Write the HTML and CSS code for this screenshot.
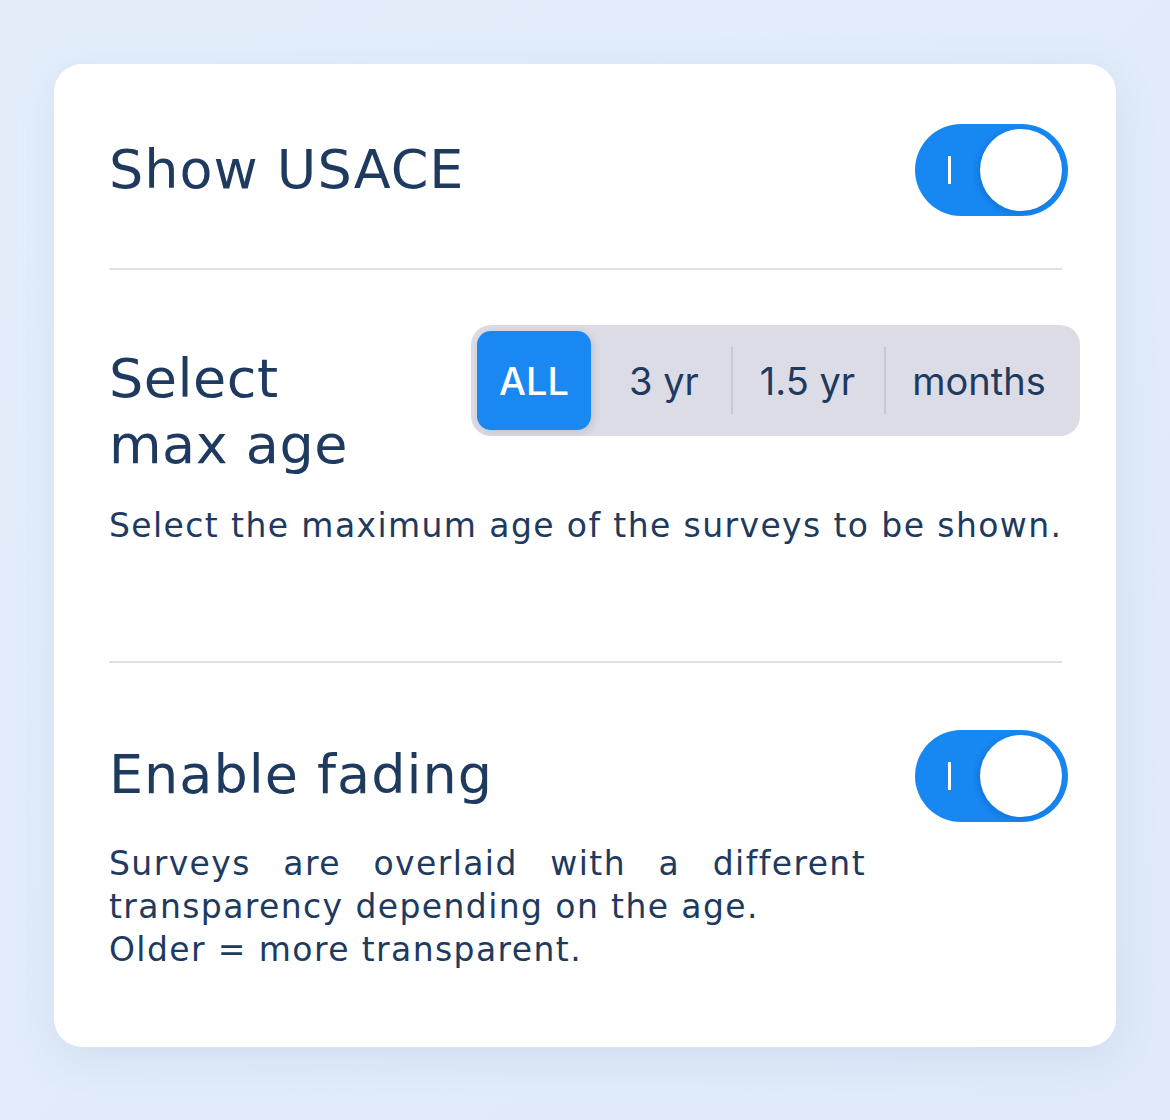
FILE: index.html
```html
<!DOCTYPE html>
<html lang="en">
<head>
    <meta charset="UTF-8">
    <meta name="viewport" content="width=device-width, initial-scale=1.0">
    <title>Survey Settings</title>
    <link rel="stylesheet" href="styles.css">
</head>
<body>
    <div class="card">
        <div class="section row">
            <div class="label">Show USACE</div>
            <div class="toggle on"><span class="mark"></span><span class="thumb"></span></div>
        </div>

        <div class="section age">
            <div class="row top">
                <div class="label narrow">Select max age</div>
                <div class="segments">
                    <div class="seg active">ALL</div>
                    <div class="seg">3 yr</div>
                    <div class="seg">1.5 yr</div>
                    <div class="seg">months</div>
                </div>
            </div>
            <p class="desc single">Select the maximum age of the surveys to be shown.</p>
        </div>

        <div class="section fading">
            <div class="row top">
                <div class="label">Enable fading</div>
                <div class="toggle on"><span class="mark"></span><span class="thumb"></span></div>
            </div>
            <p class="desc justify">Surveys are overlaid with a different transparency depending on the age.<br>Older = more transparent.</p>
        </div>
    </div>
</body>
</html>
```

FILE: styles.css
```css
body {
    margin: 0;
    background: linear-gradient(135deg, #e4eefb, #dfe9f8);
    font-family: 'DejaVu Sans', sans-serif;
    color: #1e3a5f;
    height: 1120px;
    overflow: hidden;
}
.card {
    width: 1062px;
    height: 983px;
    margin: 64px 0 0 54px;
    padding: 0 54px 0 55px;
    box-sizing: border-box;
    background: #fff;
    border-radius: 28px;
    box-shadow: 0 10px 40px rgba(120, 150, 200, 0.15);
}
.section {
    border-bottom: 2px solid #dde2ea;
}
.section:last-child {
    border-bottom: none;
}
.row {
    display: flex;
    justify-content: space-between;
    align-items: center;
}
.section.row {
    padding: 60px 0 52px;
}
.row.top {
    align-items: flex-start;
}
.label {
    font-size: 54px;
    line-height: 66px;
    letter-spacing: 1px;
}
.label.narrow {
    width: 290px;
    letter-spacing: 0.5px;
}
.toggle {
    position: relative;
    width: 153px;
    height: 92px;
    border-radius: 46px;
    background: #1787f2;
    margin-right: -6px;
    flex-shrink: 0;
}
.toggle .thumb {
    position: absolute;
    right: 6px;
    top: 5px;
    width: 82px;
    height: 82px;
    border-radius: 50%;
    background: #fff;
    box-shadow: -2px 2px 6px rgba(0, 40, 100, 0.2);
}
.toggle .mark {
    position: absolute;
    left: 33px;
    top: 32px;
    width: 3px;
    height: 28px;
    background: #fff;
}

.age {
    padding: 55px 0 113px;
}
.age .label {
    padding-top: 21px;
}
.segments {
    display: flex;
    align-items: center;
    background: #dcdce6;
    border-radius: 20px;
    padding: 6px;
    margin-right: -18px;
    height: 111px;
    box-sizing: border-box;
    font-family: Inter, 'Roboto', sans-serif;
    font-size: 38px;
}
.seg {
    height: 99px;
    display: flex;
    align-items: center;
    justify-content: center;
    color: #1e3a5f;
    position: relative;
}
.seg.active {
    width: 114px;
    background: #1a88f3;
    color: #fff;
    font-weight: 500;
    border-radius: 14px;
    box-shadow: 2px 2px 8px rgba(0, 0, 0, 0.12);
}
.seg:nth-child(2) { width: 140px; padding-left: 6px; box-sizing: border-box; }
.seg:nth-child(3) { width: 153px; }
.seg:nth-child(4) { width: 190px; }
.seg:nth-child(3)::before,
.seg:nth-child(4)::before {
    content: '';
    position: absolute;
    left: 0;
    top: 16px;
    bottom: 16px;
    width: 2px;
    background: #c8c8d2;
}
.desc {
    font-size: 33px;
    line-height: 44px;
    margin: 26px 0 0;
    letter-spacing: 1.4px;
}
.desc.single {
    white-space: nowrap;
}

.fading {
    padding: 67px 0 0;
}
.fading .label {
    padding-top: 12px;
}
.desc.justify {
    width: 757px;
    text-align: justify;
    margin-top: 20px;
    line-height: 43px;
}
```
